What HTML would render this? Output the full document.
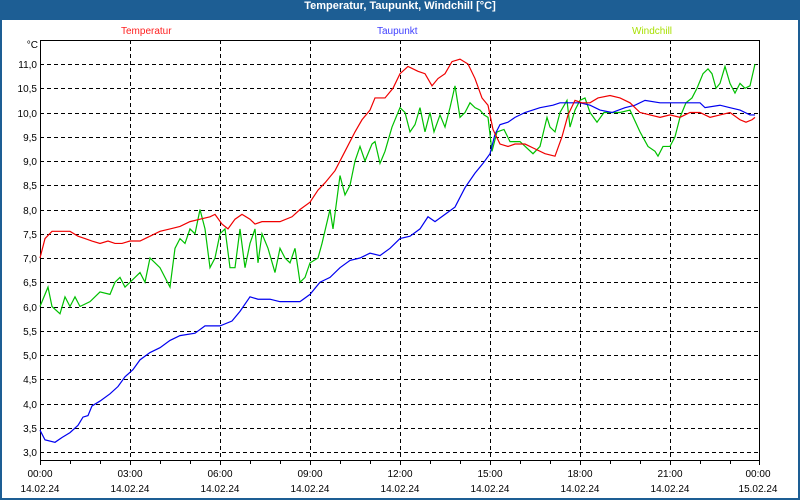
<!DOCTYPE html>
<html><head><meta charset="utf-8"><style>
html,body{margin:0;padding:0;width:800px;height:500px;overflow:hidden;background:#1d5e94}
#f{position:absolute;left:2px;top:20px;width:796px;height:478px;background:#fff}
#t{position:absolute;left:0;top:0;width:800px;height:20px;line-height:19px;text-align:center;color:#fff;font:bold 11px "Liberation Sans",sans-serif}
svg{position:absolute;left:0;top:0}
text{font-family:"Liberation Sans",sans-serif;font-size:10px}
</style></head><body>
<div id="t">Temperatur, Taupunkt, Windchill [°C]</div>
<div id="f"></div>
<svg width="800" height="500">
<g stroke="#000" stroke-dasharray="4,3" stroke-width="1">
<line x1="40" x2="760" y1="64.5" y2="64.5"/><line x1="40" x2="760" y1="88.5" y2="88.5"/><line x1="40" x2="760" y1="113.5" y2="113.5"/><line x1="40" x2="760" y1="137.5" y2="137.5"/><line x1="40" x2="760" y1="161.5" y2="161.5"/><line x1="40" x2="760" y1="185.5" y2="185.5"/><line x1="40" x2="760" y1="210.5" y2="210.5"/><line x1="40" x2="760" y1="234.5" y2="234.5"/><line x1="40" x2="760" y1="258.5" y2="258.5"/><line x1="40" x2="760" y1="282.5" y2="282.5"/><line x1="40" x2="760" y1="307.5" y2="307.5"/><line x1="40" x2="760" y1="331.5" y2="331.5"/><line x1="40" x2="760" y1="355.5" y2="355.5"/><line x1="40" x2="760" y1="379.5" y2="379.5"/><line x1="40" x2="760" y1="404.5" y2="404.5"/><line x1="40" x2="760" y1="428.5" y2="428.5"/><line x1="40" x2="760" y1="452.5" y2="452.5"/>
<line y1="40" y2="460" x1="130.5" x2="130.5"/><line y1="40" y2="460" x1="220.5" x2="220.5"/><line y1="40" y2="460" x1="310.5" x2="310.5"/><line y1="40" y2="460" x1="400.5" x2="400.5"/><line y1="40" y2="460" x1="490.5" x2="490.5"/><line y1="40" y2="460" x1="580.5" x2="580.5"/><line y1="40" y2="460" x1="670.5" x2="670.5"/>
</g>
<rect x="40.5" y="40.5" width="719" height="420" fill="none" stroke="#000"/>
<g stroke="#000"><path d="M40.5 460v5M70.5 460v4M100.5 460v4M130.5 460v5M160.5 460v4M190.5 460v4M220.5 460v5M250.5 460v4M280.5 460v4M310.5 460v5M340.5 460v4M370.5 460v4M400.5 460v5M430.5 460v4M460.5 460v4M490.5 460v5M520.5 460v4M550.5 460v4M580.5 460v5M610.5 460v4M640.5 460v4M670.5 460v5M700.5 460v4M730.5 460v4M759.5 460v5"/></g>
<g transform="matrix(1 0 0 -48.5 0 597.5)" fill="none" stroke-width="1.2">
<polyline vector-effect="non-scaling-stroke" stroke="#00c000" points="40,6 48,6.4 52,6 60,5.85 65,6.2 70,6 75,6.2 80,6 90,6.1 100,6.3 110,6.25 115,6.5 120,6.6 125,6.4 130,6.5 140,6.7 145,6.5 150,7 160,6.8 170,6.4 175,7.2 180,7.4 185,7.3 190,7.6 195,7.5 200,8 205,7.6 210,6.8 215,7 220,7.5 225,7.6 230,6.8 235,6.8 240,7.6 245,6.8 250,7.3 255,7.6 258,6.9 262,7.5 268,7.2 275,6.7 280,7.2 285,7 290,6.9 295,7.2 300,6.5 305,6.6 310,6.9 318,7 322,7.3 330,8 333,7.6 340,8.7 345,8.3 350,8.5 355,9 360,9.3 365,9 372,9.35 375,9.4 380,8.95 385,9.2 392,9.7 400,10.1 405,10 410,9.6 415,9.75 420,10.1 425,9.6 430,10 434,9.6 440,9.95 445,9.7 450,10.1 455,10.55 460,9.9 465,10 470,10.2 475,10.1 480,10.05 484,9.95 488,9.9 492,9.2 497,9.6 504,9.65 510,9.4 520,9.4 533,9.15 540,9.3 547,9.9 550,9.7 555,9.6 560,10 567,10.25 570,9.7 575,10.05 580,10.25 585,10.3 590,10 597,9.8 604,10 610,10 620,10 630,10.05 640,9.6 648,9.3 655,9.2 658,9.1 663,9.3 670,9.3 675,9.5 680,9.9 686,10.2 692,10.3 697,10.5 703,10.8 708,10.9 712,10.8 716,10.5 720,10.6 725,10.95 730,10.6 735,10.4 740,10.6 745,10.5 750,10.55 755,11"/>
<polyline vector-effect="non-scaling-stroke" stroke="#0000f0" points="40,3.45 45,3.25 55,3.2 62,3.3 70,3.4 78,3.55 83,3.72 88,3.75 92,3.95 100,4.05 110,4.2 118,4.35 125,4.55 133,4.7 140,4.9 150,5.05 160,5.15 170,5.3 180,5.4 195,5.45 205,5.6 220,5.6 232,5.7 240,5.9 250,6.2 258,6.15 270,6.15 280,6.1 300,6.1 310,6.25 320,6.5 330,6.6 340,6.8 350,6.95 360,7 370,7.1 380,7.05 390,7.2 400,7.4 410,7.45 420,7.6 428,7.85 435,7.75 445,7.9 455,8.05 465,8.45 475,8.75 483,8.95 490,9.15 495,9.55 500,9.75 508,9.8 515,9.9 525,10 540,10.1 553,10.15 560,10.2 572,10.2 580,10.2 590,10.15 600,10.05 612,10 625,10.1 635,10.15 645,10.25 660,10.2 668,10.2 680,10.2 700,10.2 705,10.1 720,10.15 730,10.1 740,10.05 750,9.95 755,9.95"/>
<polyline vector-effect="non-scaling-stroke" stroke="#f00000" points="40,7 45,7.4 52,7.55 60,7.55 70,7.55 78,7.45 85,7.4 92,7.35 100,7.3 108,7.35 115,7.3 122,7.3 130,7.35 140,7.35 150,7.45 160,7.55 170,7.6 180,7.65 190,7.75 200,7.8 210,7.85 215,7.9 222,7.7 228,7.6 235,7.8 242,7.9 250,7.8 255,7.7 262,7.75 270,7.75 280,7.75 292,7.85 300,8 310,8.15 318,8.4 325,8.55 335,8.8 345,9.2 355,9.6 362,9.85 370,10.05 375,10.3 385,10.3 393,10.5 400,10.8 408,10.95 418,10.85 425,10.8 432,10.55 438,10.7 445,10.8 452,11.05 460,11.1 468,11 475,10.7 482,10.3 488,10.15 493,9.65 500,9.35 508,9.3 515,9.35 525,9.35 535,9.25 545,9.15 555,9.1 562,9.5 568,9.95 575,10.25 582,10.2 590,10.2 598,10.3 610,10.35 620,10.3 630,10.2 640,10 650,9.95 660,9.9 670,9.95 680,9.9 690,10 700,10 710,9.9 720,9.95 730,10 740,9.85 746,9.8 752,9.85 755,9.9"/>
</g>
<g text-anchor="end" fill="#000">
<text x="38" y="48">°C</text>
<text x="37" y="68">11,0</text><text x="37" y="92">10,5</text><text x="37" y="117">10,0</text><text x="37" y="141">9,5</text><text x="37" y="165">9,0</text><text x="37" y="189">8,5</text><text x="37" y="214">8,0</text><text x="37" y="238">7,5</text><text x="37" y="262">7,0</text><text x="37" y="286">6,5</text><text x="37" y="311">6,0</text><text x="37" y="335">5,5</text><text x="37" y="359">5,0</text><text x="37" y="383">4,5</text><text x="37" y="408">4,0</text><text x="37" y="432">3,5</text><text x="37" y="456">3,0</text>
</g>
<g text-anchor="middle" fill="#000">
<text x="40" y="477">00:00</text><text x="40" y="492">14.02.24</text>
<text x="130" y="477">03:00</text><text x="130" y="492">14.02.24</text>
<text x="220" y="477">06:00</text><text x="220" y="492">14.02.24</text>
<text x="310" y="477">09:00</text><text x="310" y="492">14.02.24</text>
<text x="400" y="477">12:00</text><text x="400" y="492">14.02.24</text>
<text x="490" y="477">15:00</text><text x="490" y="492">14.02.24</text>
<text x="580" y="477">18:00</text><text x="580" y="492">14.02.24</text>
<text x="670" y="477">21:00</text><text x="670" y="492">14.02.24</text>
<text x="758" y="477">00:00</text><text x="758" y="492">15.02.24</text>
</g>
<text x="121" y="34" fill="#ff2020">Temperatur</text>
<text x="377" y="34" fill="#4040ff">Taupunkt</text>
<text x="632" y="34" fill="#a8e000">Windchill</text>
</svg>
</body></html>
